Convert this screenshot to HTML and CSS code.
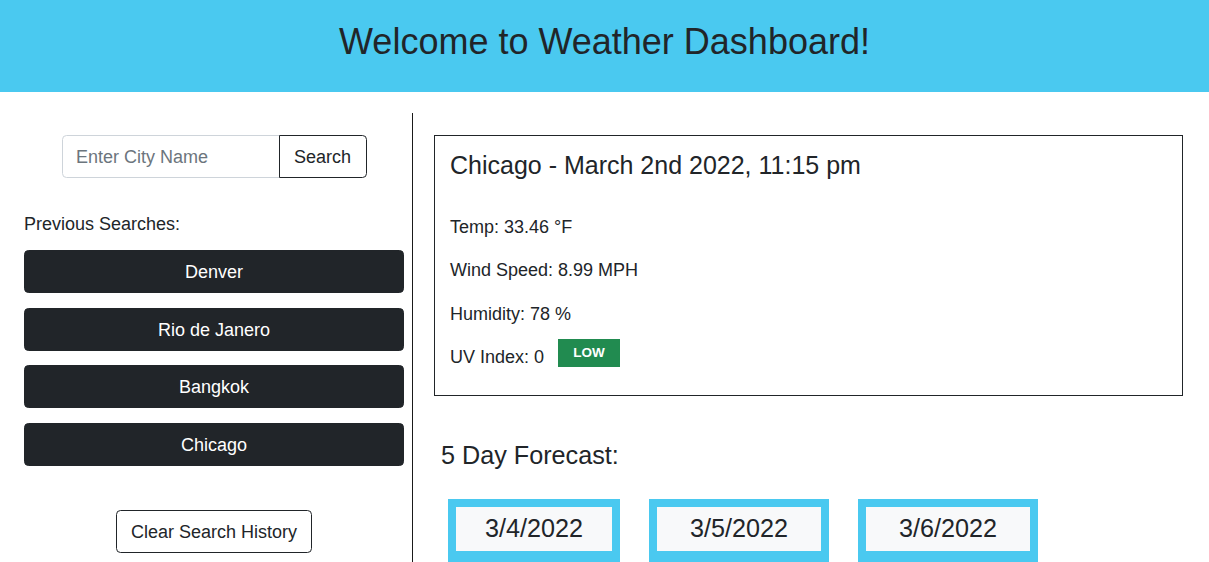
FILE: index.html
```html
<!DOCTYPE html>
<html lang="en">
<head>
<meta charset="utf-8">
<title>Weather Dashboard</title>
<link rel="stylesheet" href="styles.css">
</head>
<body>
<header class="top-bar">
  <h1 class="top-title">Welcome to Weather Dashboard!</h1>
</header>
<main class="layout">
  <aside class="sidebar">
    <form class="search-group">
      <input class="search-input" type="text" placeholder="Enter City Name">
      <button class="search-btn" type="button">Search</button>
    </form>
    <p class="prev-label">Previous Searches:</p>
    <div class="history">
      <button class="city-btn" type="button">Denver</button>
      <button class="city-btn" type="button">Rio de Janero</button>
      <button class="city-btn" type="button">Bangkok</button>
      <button class="city-btn" type="button">Chicago</button>
    </div>
    <button class="clear-btn" type="button">Clear Search History</button>
  </aside>
  <section class="content">
    <div class="current">
      <h2 class="current-title">Chicago - March 2nd 2022, 11:15 pm</h2>
      <p class="stat">Temp: 33.46 °F</p>
      <p class="stat">Wind Speed: 8.99 MPH</p>
      <p class="stat">Humidity: 78 %</p>
      <div class="stat uv-row"><span>UV Index: 0</span><span class="uv-badge">LOW</span></div>
    </div>
    <h3 class="forecast-title">5 Day Forecast:</h3>
    <div class="forecast">
      <div class="day day-narrow"><div class="day-date">3/4/2022</div></div>
      <div class="day"><div class="day-date">3/5/2022</div></div>
      <div class="day"><div class="day-date">3/6/2022</div></div>
    </div>
  </section>
</main>
</body>
</html>
```
FILE: styles.css
```css
* { box-sizing: border-box; }

body {
  margin: 0;
  font-family: "Liberation Sans", Arial, Helvetica, sans-serif;
  font-size: 18px;
  line-height: 1.5;
  color: #212529;
  background: #fff;
}

.top-bar {
  height: 92px;
  padding-top: 20px;
  background: #4ac9f0;
  text-align: center;
}

.top-title {
  margin: 0;
  font-size: 36px;
  font-weight: 400;
  line-height: 1.2;
}

.layout {
  display: flex;
  margin-top: 21px;
}

.sidebar {
  width: 413px;
  flex: none;
  border-right: 1px solid #1a1a1a;
  padding: 22px 8px 16px 24px;
  display: flex;
  flex-direction: column;
  min-height: 460px;
}

.search-group {
  display: flex;
  justify-content: center;
  margin: 0;
}

.search-input {
  width: 218px;
  height: 43px;
  border: 1px solid #ced4da;
  border-radius: 4.5px 0 0 4.5px;
  padding: 7px 13.5px 5px;
  font: inherit;
  font-size: 18px;
  color: #212529;
}

.search-input::placeholder { color: #6c757d; }

.search-btn {
  height: 43px;
  width: 88px;
  margin-left: -1px;
  border: 1px solid #212529;
  border-radius: 0 4.5px 4.5px 0;
  background: #fff;
  font: inherit;
  font-size: 18px;
  color: #212529;
  padding: 1px 0 0;
}

.prev-label {
  margin: 33px 0 12px;
  line-height: 27px;
}

.history {
  display: flex;
  flex-direction: column;
  gap: 14.7px;
}

.city-btn {
  display: block;
  width: 100%;
  height: 43px;
  border: 1px solid #212529;
  border-radius: 4.5px;
  background: #212529;
  color: #fff;
  font: inherit;
  font-size: 18px;
  line-height: 27px;
  padding: 8px 13.5px 6px;
}

.clear-btn {
  align-self: center;
  height: 43px;
  margin-top: 44px;
  border: 1px solid #212529;
  border-radius: 4.5px;
  background: #fff;
  color: #212529;
  font: inherit;
  font-size: 18px;
  line-height: 27px;
  padding: 8px 13.5px 6px;
}

.content {
  flex: 1;
  padding: 22px 26px 0 21px;
}

.current {
  border: 1px solid #212529;
  padding: 14px 15px 24px;
}

.current-title {
  margin: 0 0 33.5px;
  font-size: 25px;
  font-weight: 400;
  line-height: 30px;
}

.stat {
  margin: 0 0 16.5px;
  line-height: 27px;
}

.stat:last-child { margin-bottom: 0; }

.uv-row {
  display: flex;
  align-items: flex-start;
}

.uv-badge {
  margin: -5px 0 0 14px;
  width: 62px;
  height: 28px;
  background: #218b50;
  color: #fff;
  font-size: 13.5px;
  font-weight: 700;
  line-height: 28px;
  text-align: center;
}

.forecast-title {
  margin: 43.5px 0 0 7px;
  font-size: 25.2px;
  font-weight: 400;
  line-height: 1.2;
}

.forecast {
  display: flex;
  gap: 29px;
  margin: 29px 0 0 14px;
}

.day {
  width: 180px;
  min-height: 110px;
  padding: 8px;
  background: #4ac9f0;
}

.day-narrow { width: 172px; }

.day-date {
  background: #f8f9fa;
  text-align: center;
  font-size: 25.2px;
  line-height: 30px;
  padding: 6px 0 8px;
}
```
